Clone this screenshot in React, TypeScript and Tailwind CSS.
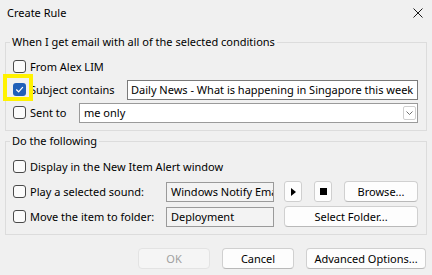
// Outlook "Create Rule" dialog

const Checkbox = ({ checked = false }: { checked?: boolean }) =>
  checked ? (
    <span className="w-[13px] h-[13px] shrink-0 rounded-[3px] bg-[#1f5fb8] flex items-center justify-center">
      <svg width="9" height="9" viewBox="0 0 9 9">
        <path d="M1.5 4.8 L3.6 6.8 L7.6 2.4" fill="none" stroke="#fff" strokeWidth="1.2" strokeLinecap="round" strokeLinejoin="round" />
      </svg>
    </span>
  ) : (
    <span className="w-[13px] h-[13px] shrink-0 rounded-[3px] border border-[#4a4a4a] bg-[#fbfbfb]"></span>
  );

const Button = ({ label, className = "", disabled = false }: { label: string; className?: string; disabled?: boolean }) => (
  <div
    className={`h-[21px] flex items-center justify-center rounded-[4px] border ${disabled
        ? "bg-[#f5f5f5] border-[#e3e3e3] text-[#a0a0a0]"
        : "bg-[#fdfdfd] border-[#d0d0d0] border-b-[#b9b9b9] text-black"
      } ${className}`}
  >
    {label}
  </div>
);

const App = () => {
  return (
    <div
      className="relative w-[432px] h-[275px] overflow-hidden bg-[#f0f0f0] text-[11px] leading-[16px] text-black"
      style={{ fontFamily: '"Noto Sans", "Segoe UI", sans-serif' }}
    >
      {/* Title bar */}
      <div className="h-[26px] flex items-center justify-between pl-[7px] pr-[9px]">
        <span>Create Rule</span>
        <svg width="10" height="10" viewBox="0 0 10 10">
          <path d="M0.5 0.5 L9.5 9.5 M9.5 0.5 L0.5 9.5" stroke="#1a1a1a" strokeWidth="1" />
        </svg>
      </div>

      <div className="pt-[8px]">
        {/* Conditions */}
        <fieldset className="mx-[5px] border border-[#dcdcdc] pl-[7px] pr-[8px] pt-[5px] pb-[6px]">
          <legend className="-ml-[3px] px-[2px]">When I get email with all of the selected conditions</legend>
          <div className="h-[23px] flex items-center gap-[4px]">
            <Checkbox />
            <span>From Alex LIM</span>
          </div>
          <div className="h-[23px] flex items-center">
            <div className="w-[114px] flex items-center gap-[4px]">
              <Checkbox checked />
              <span>Subject contains</span>
            </div>
            <div className="flex-1 h-[20px] border border-[#7a7a7a] bg-white pl-[3px] flex items-center whitespace-nowrap overflow-hidden">
              Daily News - What is happening in Singapore this week
            </div>
          </div>
          <div className="h-[23px] flex items-center">
            <div className="w-[66px] flex items-center gap-[4px]">
              <Checkbox />
              <span>Sent to</span>
            </div>
            <div className="flex-1 h-[20px] border border-[#9a9a9a] bg-white pl-[4px] pr-[1px] flex items-center justify-between">
              <span>me only</span>
              <span className="w-[13px] h-[14px] border border-[#cfcfcf] rounded-[2px] flex items-center justify-center">
                <svg width="7" height="4" viewBox="0 0 7 4">
                  <path d="M0.5 0.5 L3.5 3.5 L6.5 0.5" fill="none" stroke="#606060" strokeWidth="0.9" />
                </svg>
              </span>
            </div>
          </div>
        </fieldset>

        {/* Actions */}
        <fieldset className="mx-[5px] mt-[2px] border border-[#dcdcdc] pl-[7px] pr-[8px] pt-[5px] pb-[5px]">
          <legend className="-ml-[3px] px-[2px]">Do the following</legend>
          <div className="h-[25px] flex items-center gap-[4px]">
            <Checkbox />
            <span>Display in the New Item Alert window</span>
          </div>
          <div className="h-[25px] flex items-center">
            <div className="w-[153px] flex items-center gap-[4px]">
              <Checkbox />
              <span>Play a selected sound:</span>
            </div>
            <div className="w-[108px] h-[20px] border border-[#9a9a9a] bg-[#f3f3f3] pl-[4px] flex items-center whitespace-nowrap overflow-hidden">
              Windows Notify Email
            </div>
            <div className="ml-[10px] w-[18px] h-[21px] rounded-[3px] border border-[#cfcfcf] bg-[#fdfdfd] flex items-center justify-center">
              <svg width="5" height="8" viewBox="0 0 5 8">
                <path d="M0 0 L5 4 L0 8 Z" fill="#000" />
              </svg>
            </div>
            <div className="ml-[12px] w-[18px] h-[21px] rounded-[3px] border border-[#cfcfcf] bg-[#fdfdfd] flex items-center justify-center">
              <span className="w-[7px] h-[7px] bg-black"></span>
            </div>
            <Button label="Browse..." className="ml-[12px] w-[74px] h-[20px]" />
          </div>
          <div className="h-[25px] flex items-center">
            <div className="w-[153px] flex items-center gap-[4px]">
              <Checkbox />
              <span>Move the item to folder:</span>
            </div>
            <div className="w-[108px] h-[20px] border border-[#9a9a9a] bg-[#f3f3f3] pl-[4px] flex items-center whitespace-nowrap overflow-hidden">
              Deployment
            </div>
            <Button label="Select Folder..." className="ml-[10px] w-[134px]" />
          </div>
        </fieldset>

        {/* Dialog buttons */}
        <div className="mt-[13px] pr-[6px] flex justify-end gap-[12px]">
          <Button label="OK" disabled className="w-[72px]" />
          <Button label="Cancel" className="w-[72px]" />
          <Button label="Advanced Options..." className="w-[120px]" />
        </div>
      </div>

      {/* Yellow highlight annotation */}
      <div className="absolute left-[3px] top-[74px] w-[30px] h-[27px] border-[4px] border-[#fff200]"></div>
    </div>
  );
};

export default App;
